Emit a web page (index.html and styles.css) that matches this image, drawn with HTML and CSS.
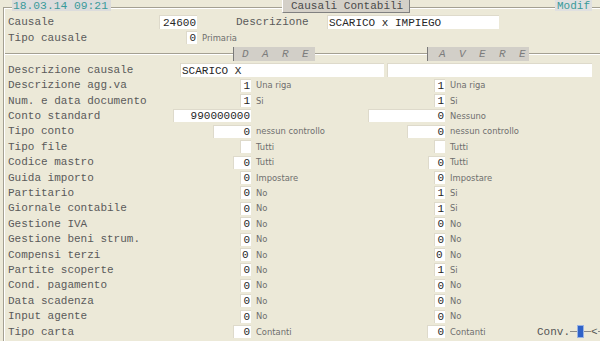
FILE: index.html
```html
<!DOCTYPE html>
<html>
<head>
<meta charset="utf-8">
<link rel="stylesheet" href="styles.css">
</head>
<body>
<div class="frame">
  <div class="titlebar">
    <span class="date">18.03.14 09:21</span>
    <span class="tab">Causali Contabili</span>
    <span class="modif">Modif</span>
  </div>

  <div class="head-row r1">
    <span class="lbl w-causale">Causale</span>
    <span class="fld h14" style="width:38px">24600</span>
    <span class="lbl w-descr">Descrizione</span>
    <span class="fld h14 left" style="width:172px">SCARICO x IMPIEGO</span>
  </div>
  <div class="head-row r2">
    <span class="lbl w-tipo">Tipo causale</span>
    <span class="fld" style="width:11px">0</span>
    <span class="desc">Primaria</span>
  </div>

  <div class="section">
    <span class="sect dare">D A R E</span>
    <span class="sect avere">A V E R E</span>
  </div>

  <div class="rows">
    <div class="row wide">
      <span class="lbl w-dc">Descrizione causale</span>
      <span class="fld h14 left" style="width:204px">SCARICO X</span>
      <span class="fld h14 left gap3" style="width:205px"></span>
    </div>

    <div class="row">
      <div class="ca"><span class="lbl">Descrizione agg.va</span><span class="fld" style="width:11px">1</span></div>
      <div class="cb"><span class="desc">Una riga</span><span class="fld" style="width:11px">1</span></div>
      <div class="cc"><span class="desc">Una riga</span></div>
    </div>
    <div class="row">
      <div class="ca"><span class="lbl">Num. e data documento</span><span class="fld" style="width:11px">1</span></div>
      <div class="cb"><span class="desc">Si</span><span class="fld" style="width:11px">1</span></div>
      <div class="cc"><span class="desc">Si</span></div>
    </div>
    <div class="row">
      <div class="ca"><span class="lbl">Conto standard</span><span class="fld" style="width:78px">990000000</span></div>
      <div class="cb"><span class="desc"></span><span class="fld" style="width:77px">0</span></div>
      <div class="cc"><span class="desc">Nessuno</span></div>
    </div>
    <div class="row">
      <div class="ca"><span class="lbl">Tipo conto</span><span class="fld" style="width:38px">0</span></div>
      <div class="cb"><span class="desc">nessun controllo</span><span class="fld" style="width:38px">0</span></div>
      <div class="cc"><span class="desc">nessun controllo</span></div>
    </div>
    <div class="row">
      <div class="ca"><span class="lbl">Tipo file</span><span class="fld" style="width:11px"></span></div>
      <div class="cb"><span class="desc">Tutti</span><span class="fld" style="width:11px"></span></div>
      <div class="cc"><span class="desc">Tutti</span></div>
    </div>
    <div class="row">
      <div class="ca"><span class="lbl">Codice mastro</span><span class="fld" style="width:18px">0</span></div>
      <div class="cb"><span class="desc">Tutti</span><span class="fld" style="width:17px">0</span></div>
      <div class="cc"><span class="desc">Tutti</span></div>
    </div>
    <div class="row">
      <div class="ca"><span class="lbl">Guida importo</span><span class="fld" style="width:11px">0</span></div>
      <div class="cb"><span class="desc">Impostare</span><span class="fld" style="width:11px">0</span></div>
      <div class="cc"><span class="desc">Impostare</span></div>
    </div>
    <div class="row">
      <div class="ca"><span class="lbl">Partitario</span><span class="fld" style="width:11px">0</span></div>
      <div class="cb"><span class="desc">No</span><span class="fld" style="width:11px">1</span></div>
      <div class="cc"><span class="desc">Si</span></div>
    </div>
    <div class="row">
      <div class="ca"><span class="lbl">Giornale contabile</span><span class="fld" style="width:11px">0</span></div>
      <div class="cb"><span class="desc">No</span><span class="fld" style="width:11px">1</span></div>
      <div class="cc"><span class="desc">Si</span></div>
    </div>
    <div class="row">
      <div class="ca"><span class="lbl">Gestione IVA</span><span class="fld" style="width:11px">0</span></div>
      <div class="cb"><span class="desc">No</span><span class="fld" style="width:11px">0</span></div>
      <div class="cc"><span class="desc">No</span></div>
    </div>
    <div class="row">
      <div class="ca"><span class="lbl">Gestione beni strum.</span><span class="fld" style="width:11px">0</span></div>
      <div class="cb"><span class="desc">No</span><span class="fld" style="width:11px">0</span></div>
      <div class="cc"><span class="desc">No</span></div>
    </div>
    <div class="row">
      <div class="ca"><span class="lbl">Compensi terzi</span><span class="fld left" style="width:11px">0</span></div>
      <div class="cb"><span class="desc">No</span><span class="fld left" style="width:11px">0</span></div>
      <div class="cc"><span class="desc">No</span></div>
    </div>
    <div class="row">
      <div class="ca"><span class="lbl">Partite scoperte</span><span class="fld" style="width:11px">0</span></div>
      <div class="cb"><span class="desc">No</span><span class="fld" style="width:11px">1</span></div>
      <div class="cc"><span class="desc">Si</span></div>
    </div>
    <div class="row">
      <div class="ca"><span class="lbl">Cond. pagamento</span><span class="fld" style="width:11px">0</span></div>
      <div class="cb"><span class="desc">No</span><span class="fld" style="width:11px">0</span></div>
      <div class="cc"><span class="desc">No</span></div>
    </div>
    <div class="row">
      <div class="ca"><span class="lbl">Data scadenza</span><span class="fld" style="width:11px">0</span></div>
      <div class="cb"><span class="desc">No</span><span class="fld" style="width:11px">0</span></div>
      <div class="cc"><span class="desc">No</span></div>
    </div>
    <div class="row">
      <div class="ca"><span class="lbl">Input agente</span><span class="fld" style="width:11px">0</span></div>
      <div class="cb"><span class="desc">No</span><span class="fld" style="width:11px">0</span></div>
      <div class="cc"><span class="desc">No</span></div>
    </div>
    <div class="row">
      <div class="ca"><span class="lbl">Tipo carta</span><span class="fld" style="width:18px">0</span></div>
      <div class="cb"><span class="desc">Contanti</span><span class="fld" style="width:18px">0</span></div>
      <div class="cc">
        <span class="desc">Contanti</span>
        <span class="conv">
          <span class="conv-lbl">Conv.</span>
          <span class="hl w8"></span>
          <span class="blue"></span>
          <span class="hl w8"></span>
          <span class="lt">&lt;</span>
          <span class="hl grow"></span>
        </span>
      </div>
    </div>
  </div>
</div>
</body>
</html>
```

FILE: styles.css
```css
html, body {
  margin: 0;
  padding: 0;
  background: #ece9d8;
  width: 600px;
  height: 341px;
  overflow: hidden;
}

.frame {
  margin: 7px 0 0 3px;
  border-top: 1px solid #a4a092;
  border-left: 1px solid #a4a092;
  box-shadow: inset 1px 1px 0 #ffffff;
  height: 340px;
  font-family: "Liberation Mono", "Courier New", monospace;
  font-size: 11px;
  color: #5a5a5a;
}

.titlebar {
  display: flex;
  align-items: flex-start;
  height: 12px;
  margin-top: -8px;
}
.date {
  margin-left: 8px;
  width: 98px;
  height: 11px;
  line-height: 12px;
  padding-left: 1px;
  background: #dcdcdc;
  color: #3a9a9a;
  font-size: 11.3px;
}
.tab {
  margin-left: 171px;
  width: 118px;
  height: 12px;
  line-height: 12px;
  padding-left: 8px;
  background: #d4d0c8;
  border-left: 1px solid #ffffff;
  border-right: 1px solid #808080;
  border-bottom: 1px solid #808080;
  color: #4a4a4a;
}
.modif {
  margin-left: 145px;
  width: 35px;
  height: 11px;
  line-height: 12px;
  padding-left: 2px;
  background: #e0e0e0;
  color: #3a9a9a;
}

.lbl {
  white-space: pre;
}
.fld {
  display: inline-block;
  box-sizing: border-box;
  height: 13px;
  line-height: 13px;
  background: #ffffff;
  border-top: 1px solid #dedacb;
  border-left: 1px solid #dedacb;
  text-align: right;
  padding-right: 1px;
  color: #262626;
  font-family: "Liberation Mono", "Courier New", monospace;
  font-size: 11px;
  overflow: hidden;
  white-space: pre;
}
.fld.h14 {
  height: 14px;
  line-height: 14px;
}
.fld.left {
  text-align: left;
  padding-left: 1px;
}
.gap3 {
  margin-left: 3px;
}
.desc {
  font-family: "DejaVu Sans", sans-serif;
  font-size: 8.4px;
  color: #6e6e6e;
  padding-left: 5px;
  white-space: nowrap;
}

.head-row {
  display: flex;
  align-items: center;
  padding-left: 4px;
}
.head-row.r1 {
  margin-top: 3px;
  height: 15px;
  align-items: flex-start;
}
.head-row.r1 .lbl {
  line-height: 14px;
}
.head-row.r2 {
  height: 15px;
}
.w-causale { width: 151px; }
.w-descr { width: 91px; margin-left: 39px; }
.w-tipo { width: 178px; }

.section {
  height: 17px;
  display: flex;
  align-items: center;
  padding-left: 229px;
  background:
    linear-gradient(#a4a092, #a4a092) 1px 8px / 100% 1px no-repeat,
    linear-gradient(#ffffff, #ffffff) 1px 9px / 100% 1px no-repeat;
}
.sect {
  box-sizing: border-box;
  height: 14px;
  line-height: 14px;
  background: #d2cfc8;
  border-left: 1px solid #7a7a7a;
  color: #7c7c7c;
  font-style: italic;
  letter-spacing: 3.4px;
  white-space: pre;
}
.dare {
  width: 82px;
  padding-left: 8px;
}
.avere {
  width: 102px;
  margin-left: 112px;
  padding-left: 11px;
}

.rows {
  padding-left: 4px;
}
.row {
  display: grid;
  grid-template-columns: 243px 194px 1fr;
  height: 15.41px;
  align-items: center;
}
.row.wide {
  display: flex;
  align-items: center;
}
.w-dc { width: 172px; }
.ca, .cb, .cc {
  display: flex;
  align-items: center;
}
.ca {
  justify-content: space-between;
}
.cb .fld {
  margin-left: auto;
}
.cc {
  justify-content: flex-start;
}

.conv {
  margin-left: auto;
  width: 63px;
  display: flex;
  align-items: center;
}
.conv-lbl {
  color: #555555;
  white-space: pre;
}
.hl {
  height: 1px;
  background: #8a8a8a;
}
.w8 { width: 7px; }
.grow { flex: 1; }
.blue {
  width: 7px;
  height: 13px;
  box-sizing: border-box;
  background: #2f62c8;
  border: 1px solid #9ab4e4;
}
.lt {
  color: #555555;
}
```
